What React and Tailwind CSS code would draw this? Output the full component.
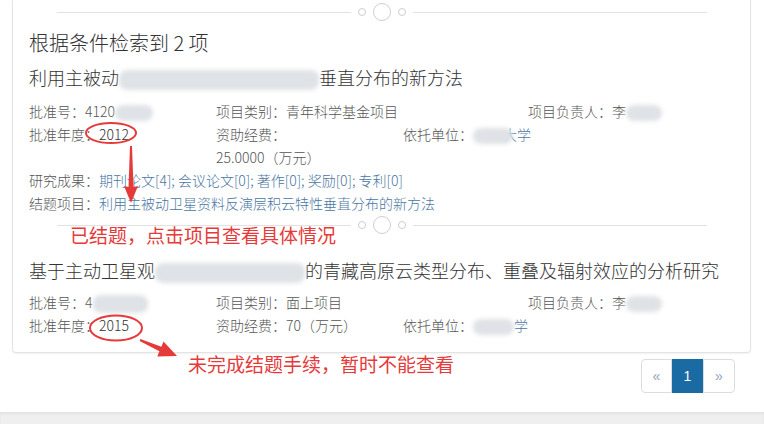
import React from 'react';

const Blob = ({ className = '' }) => (
  <span className={`inline-block align-middle rounded-[8px] bg-[#dfe2e6] blur-[2px] ${className}`} />
);

const Divider = () => (
  <div className="flex items-center justify-center h-[24px]">
    <div className="w-[294px] h-px bg-[#e2e2e2]" />
    <div className="ml-[7px] w-[8px] h-[8px] rounded-full border border-[#cfcfcf]" />
    <div className="ml-[7px] w-[18px] h-[18px] rounded-full border border-[#cfcfcf]" />
    <div className="ml-[7px] w-[8px] h-[8px] rounded-full border border-[#cfcfcf]" />
    <div className="ml-[7px] w-[294px] h-px bg-[#e2e2e2]" />
  </div>
);

const link = 'text-[#4a76a3]';

export default function App() {
  return (
    <div className="relative w-[764px] h-[424px] bg-white overflow-hidden font-['Noto_Sans_CJK_SC',sans-serif] font-light text-[#555]">
      {/* Result card */}
      <div className="ml-[12px] w-[739px] border-x border-b border-[#e4e4e4] rounded-b-[4px] shadow-[0_1px_2px_rgba(0,0,0,0.06)] px-[16px] pb-[15px]">
        <Divider />
        <h2 className="mt-[5px] text-[20px] leading-[28px] text-[#333]">根据条件检索到 2 项</h2>

        {/* Item 1 */}
        <div className="mt-[7px] text-[18px] leading-[26px] text-[#333] whitespace-nowrap">
          利用主被动<Blob className="w-[200px] h-[20px]" />垂直分布的新方法
        </div>
        <div className="mt-[10px] text-[14px] leading-[23px]">
          <div className="flex">
            <div className="w-[187px]">批准号：4120<Blob className="w-[38px] h-[16px]" /></div>
            <div className="w-[312px]">项目类别：青年科学基金项目</div>
            <div>项目负责人：李<Blob className="w-[36px] h-[16px]" /></div>
          </div>
          <div className="flex">
            <div className="w-[187px]">批准年度：<span className="text-[#333]">2012</span></div>
            <div className="w-[187px]">
              <div>资助经费：</div>
              <div>25.0000（万元）</div>
            </div>
            <div>
              依托单位：<Blob className="relative z-10 w-[40px] h-[16px] -mr-[10px]" />
              <span className={link}>大学</span>
            </div>
          </div>
          <div>
            研究成果：<span className={link}>期刊论文[4]; 会议论文[0]; 著作[0]; 奖励[0]; 专利[0]</span>
          </div>
          <div>
            结题项目：<span className={link}>利用主被动卫星资料反演层积云特性垂直分布的新方法</span>
          </div>
        </div>

        <div className="-mt-[2px]">
          <Divider />
        </div>

        {/* Item 2 */}
        <div className="mt-[20px] text-[18px] leading-[26px] text-[#333] whitespace-nowrap">
          基于主动卫星观<Blob className="w-[150px] h-[20px]" />的青藏高原云类型分布、重叠及辐射效应的分析研究
        </div>
        <div className="mt-[8px] text-[14px] leading-[23px]">
          <div className="flex">
            <div className="w-[187px]">批准号：4<Blob className="w-[55px] h-[18px]" /></div>
            <div className="w-[312px]">项目类别：面上项目</div>
            <div>项目负责人：李<Blob className="w-[36px] h-[16px]" /></div>
          </div>
          <div className="flex">
            <div className="w-[187px]">批准年度：<span className="text-[#333]">2015</span></div>
            <div className="w-[187px]">资助经费：70（万元）</div>
            <div>
              依托单位：<Blob className="w-[41px] h-[16px]" />
              <span className={link}>学</span>
            </div>
          </div>
        </div>
      </div>

      {/* Pagination */}
      <div className="ml-[12px] w-[739px] mt-[6px] pr-[16px] flex justify-end">
        <div className="flex h-[34px] text-[14px] font-['Liberation_Sans',sans-serif] font-normal">
          <div className="w-[31px] flex items-center justify-center border border-[#dddddd] rounded-l-[4px] text-[#8ea4bb]">«</div>
          <div className="w-[31px] flex items-center justify-center bg-[#1a6aa4] text-white">1</div>
          <div className="w-[32px] flex items-center justify-center border border-[#dddddd] rounded-r-[4px] text-[#8ea4bb]">»</div>
        </div>
      </div>

      {/* Page bottom strip */}
      <div className="mt-[19px] h-[14px] bg-[#efefef] shadow-[inset_0_2px_3px_rgba(0,0,0,0.05)]" />

      {/* Annotations */}
      <svg className="absolute inset-0 pointer-events-none" width="764" height="424" viewBox="0 0 764 424">
        <ellipse cx="111" cy="133" rx="25" ry="10" fill="none" stroke="#e63a3a" strokeWidth="2" />
        <polygon points="130,146 132,146 133.5,187 138,186 131,203 124,186 128.5,187" fill="#e63a3a" />
        <ellipse cx="116" cy="328" rx="26" ry="12.5" fill="none" stroke="#e63a3a" strokeWidth="2" />
        <polygon points="140.4,339.1 161.4,346.7 163.5,341.6 177,356 157.3,356.4 159.4,351.3 139.6,340.9" fill="#e63a3a" />
      </svg>
      <div className="absolute left-[70px] top-[222px] text-[19px] leading-[26px] font-normal text-[#e63a3a] whitespace-nowrap">
        已结题，点击项目查看具体情况
      </div>
      <div className="absolute left-[188px] top-[351px] text-[19px] leading-[26px] font-normal text-[#e63a3a] whitespace-nowrap">
        未完成结题手续，暂时不能查看
      </div>
    </div>
  );
}
